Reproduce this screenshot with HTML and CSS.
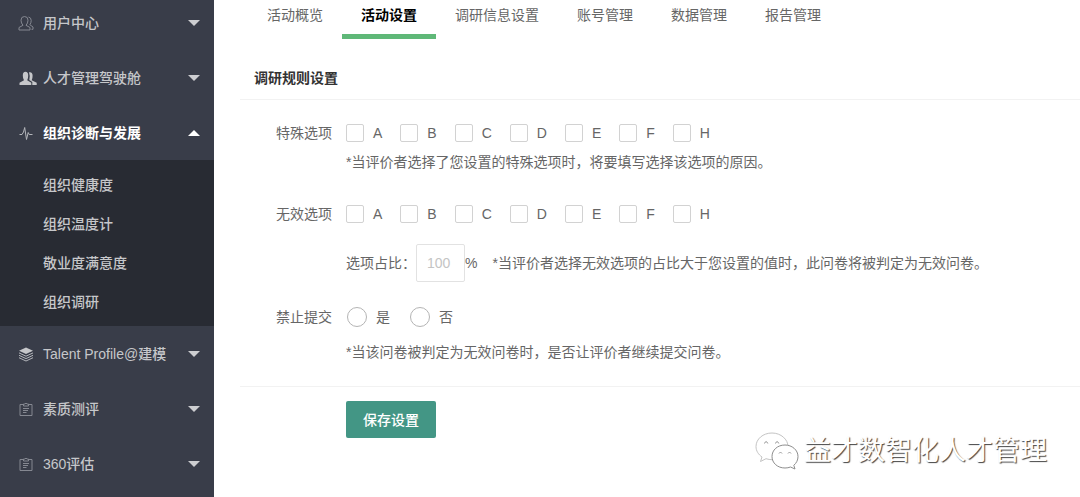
FILE: index.html
```html
<!DOCTYPE html>
<html lang="zh-CN">
<head>
<meta charset="utf-8">
<title>活动设置</title>
<link rel="stylesheet" href="styles.css">
</head>
<body>
<div class="app">
  <nav class="sidebar">
    <button class="menu" type="button">
      <svg class="icon dim" viewBox="0 0 16 16"><path d="M1 15V12.500L5 10.300Q3 8.200 3 5.200Q3 1.500 6.500 1.500T10 5.200Q10 8.200 8 10.300L12 12.500V15ZM10.500 2Q13.200 2.500 13.200 5.500Q13.200 8 11.800 9.700L15 12V14.300H13.500"/></svg>
      <span>用户中心</span><i class="caret"></i>
    </button>
    <button class="menu" type="button">
      <svg class="icon wide" viewBox="0 0 18 16"><path class="fill" d="M0.500 15V12.700L5 10.300Q3.800 8.600 3.800 5.500Q3.800 1.800 6.500 1.800T9.200 5.500Q9.200 8.600 8.200 10.300L12.300 12.700V15ZM10 2.300Q13.600 1.600 13.600 5.700Q13.600 8.600 12.700 10.300L17.700 12.700V15H13.300V12L10.300 9.900Q11.300 5.700 10 2.300Z"/></svg>
      <span>人才管理驾驶舱</span><i class="caret"></i>
    </button>
    <button class="menu open" type="button" aria-expanded="true">
      <svg class="icon" viewBox="0 0 16 16"><path d="M1.500 9.500H4L5.500 7L6.700 2.500L8.500 14.500L10.200 7.500L11.200 9.500H14.500"/></svg>
      <span>组织诊断与发展</span><i class="caret up"></i>
    </button>
    <div class="submenu">
      <a href="#">组织健康度</a>
      <a href="#">组织温度计</a>
      <a href="#">敬业度满意度</a>
      <a href="#">组织调研</a>
    </div>
    <button class="menu" type="button">
      <svg class="icon" viewBox="0 0 16 16"><path class="fill" d="M8 1.500L15 4.700L8 8L1 4.700Z"/><path d="M1 6.900L8 10.200L15 6.900M1 9.300L8 12.600L15 9.300M1 11.700L8 15L15 11.700"/></svg>
      <span>Talent Profile@建模</span><i class="caret"></i>
    </button>
    <button class="menu" type="button">
      <svg class="icon dim" viewBox="0 0 16 16"><path d="M5.500 3.500H2V14.500H14V3.500H10.500M5.500 3H7L8 2L9 3H10.500V5H5.500ZM5 7.500H11M5 9.500H10M5 11.500H8.500"/></svg>
      <span>素质测评</span><i class="caret"></i>
    </button>
    <button class="menu" type="button">
      <svg class="icon dim" viewBox="0 0 16 16"><path d="M5.500 3.500H2V14.500H14V3.500H10.500M5.500 3H7L8 2L9 3H10.500V5H5.500ZM5 7.500H11M5 9.500H10M5 11.500H8.500"/></svg>
      <span>360评估</span><i class="caret"></i>
    </button>
  </nav>

  <main class="content">
    <nav class="tabs">
      <a href="#">活动概览</a>
      <a href="#" class="current">活动设置</a>
      <a href="#">调研信息设置</a>
      <a href="#">账号管理</a>
      <a href="#">数据管理</a>
      <a href="#">报告管理</a>
    </nav>
    <h2 class="title">调研规则设置</h2>

    <form class="form">
      <div class="row" role="group" aria-labelledby="special">
        <span class="name" id="special">特殊选项</span>
        <div class="body">
          <div class="options">
            <label><input type="checkbox">A</label>
            <label><input type="checkbox">B</label>
            <label><input type="checkbox">C</label>
            <label><input type="checkbox">D</label>
            <label><input type="checkbox">E</label>
            <label><input type="checkbox">F</label>
            <label><input type="checkbox">H</label>
          </div>
          <p class="hint">*当评价者选择了您设置的特殊选项时，将要填写选择该选项的原因。</p>
        </div>
      </div>

      <div class="row" role="group" aria-labelledby="invalid">
        <span class="name" id="invalid">无效选项</span>
        <div class="body spaced">
          <div class="options">
            <label><input type="checkbox">A</label>
            <label><input type="checkbox">B</label>
            <label><input type="checkbox">C</label>
            <label><input type="checkbox">D</label>
            <label><input type="checkbox">E</label>
            <label><input type="checkbox">F</label>
            <label><input type="checkbox">H</label>
          </div>
          <div class="ratio">
            <label for="ratio">选项占比：</label>
            <input class="number" id="ratio" type="text" placeholder="100">
            <span class="unit">%</span>
            <p class="hint">*当评价者选择无效选项的占比大于您设置的值时，此问卷将被判定为无效问卷。</p>
          </div>
        </div>
      </div>

      <div class="row last" role="group" aria-labelledby="forbid">
        <span class="name" id="forbid">禁止提交</span>
        <div class="body">
          <div class="options radios">
            <label><input type="radio" name="forbid">是</label>
            <label><input type="radio" name="forbid">否</label>
          </div>
          <p class="hint">*当该问卷被判定为无效问卷时，是否让评价者继续提交问卷。</p>
        </div>
      </div>

      <div class="actions"><button class="save" type="button">保存设置</button></div>
    </form>
  </main>

  <div class="watermark">
    <svg class="wechat" viewBox="0 0 44 38">
      <path class="bubble" d="M17 1C8 1 1 7 1 14.500C1 19 3.500 22.500 7 25L5.500 29.500L11 26.700Q14 27.700 17.500 27.700C26 27.700 33 21.500 33 14.500S26 1 17 1Z"/>
      <path class="eye" d="M9.500 11.500Q11 7.500 12.800 11.500M20.500 11.500Q22 7.500 23.800 11.500"/>
      <path class="bubble front" d="M30 13C22.500 13 17 18 17 24.500S22.500 36 30 36Q33 36 35.500 35L40 37L38.800 33.300C41.500 31 43 28 43 24.500C43 18 37 13 30 13Z"/>
      <path class="eye" d="M24 21.500Q25.500 18.500 27 21.500M33 21.500Q34.500 18.500 36 21.500"/>
    </svg>
    <span>益才数智化人才管理</span>
  </div>
</div>
</body>
</html>
```

FILE: styles.css
```css
* { box-sizing: border-box; }

body {
  margin: 0;
  background: #fff;
  color: #666;
  font: 14px/20px "Liberation Sans", "Noto Sans CJK SC", sans-serif;
}

button, input { font: inherit; }
a { color: inherit; text-decoration: none; }
p, h2 { margin: 0; }

.app {
  position: relative;
  display: flex;
  height: 100vh;
  overflow: hidden;
}

/* Sidebar */
.sidebar {
  flex: 0 0 214px;
  margin-top: -5px;
  background: #393d49;
  color: #c6c7ca;
  font-weight: 500;
}

.menu {
  display: flex;
  align-items: center;
  width: 100%;
  height: 55px;
  padding: 0 14px 0 18px;
  border: 0;
  background: none;
  color: inherit;
  font-weight: 500;
  text-align: left;
}

.menu span { flex: 1; }
.menu.open { color: #fff; font-weight: 700; }

.icon {
  flex: none;
  width: 16px;
  height: 16px;
  margin-right: 9px;
  fill: none;
  stroke: #b4b6bb;
  stroke-width: 1;
}
.icon.wide { width: 18px; margin: 0 6px 0 1px; }
.icon .fill { fill: #c6c7ca; stroke: none; }
.icon.dim { stroke: #858891; }

.caret {
  border: 6px solid transparent;
  border-top-color: #cdced1;
  border-bottom: 0;
}
.caret.up {
  border-top: 0;
  border-bottom: 6px solid #fff;
}

.submenu {
  display: flex;
  flex-direction: column;
  padding: 6px 0 4px;
  background: #282b33;
}
.submenu a { padding-left: 43px; line-height: 39px; }

/* Content */
.content { flex: 1; min-width: 0; padding-left: 26px; }

.tabs { display: flex; padding-left: 8px; }
.tabs a {
  padding: 5px 19px 9px;
  border-bottom: 5px solid transparent;
  white-space: nowrap;
}
.tabs .current {
  border-color: #5fb878;
  color: #000;
  font-weight: 700;
}

.title {
  margin-top: 29px;
  padding: 0 14px 11px;
  border-bottom: 1px solid #f2f2f2;
  color: #333;
  font-size: 14px;
  font-weight: 700;
}

.form { padding-top: 14px; }

.row {
  display: grid;
  grid-template-columns: 92px 1fr;
  column-gap: 14px;
  margin-bottom: 23px;
}
.name { text-align: right; line-height: 38px; }

.options { display: flex; gap: 18px; height: 38px; }
.options label { display: flex; align-items: center; gap: 9px; }
.options input {
  appearance: none;
  width: 18px;
  height: 18px;
  margin: 0;
  border: 1px solid #d2d2d2;
  border-radius: 2px;
  background: #fff;
}
.options.radios { gap: 20px; padding-left: 1px; }
.radios input {
  width: 20px;
  height: 20px;
  border: 1px solid #b4b4b4;
  border-radius: 50%;
}

.spaced { display: grid; gap: 11px; }
.ratio { display: flex; align-items: center; height: 38px; }
.number {
  width: 49px;
  height: 38px;
  padding: 0 10px;
  border: 1px solid #e2e2e2;
  border-radius: 2px;
  color: #666;
}
.number::placeholder { color: #c4c4c4; }
.unit { margin-right: 15px; }

.last { margin: -7px 0 24px; }
.last .body { display: grid; gap: 6px; }

.actions {
  padding: 14px 0 14px 106px;
  border-top: 1px solid #f2f2f2;
}
.save {
  height: 37px;
  padding: 0 17px;
  border: 0;
  border-radius: 2px;
  background: #439685;
  color: #fff;
  font-weight: 500;
}

/* Watermark over the page */
.watermark {
  position: absolute;
  right: 33px;
  bottom: 26px;
  display: flex;
  align-items: center;
  gap: 5px;
  color: #fff;
  font-size: 27px;
  line-height: 40px;
  text-shadow: 1px 1px 1px #444;
}
.wechat { width: 44px; height: 38px; }
.bubble { fill: #fff; stroke: #c4c4c4; stroke-width: 1; }
.bubble.front { stroke: #8e8e8e; }
.eye { fill: none; stroke: #999; stroke-width: 1; }
```
